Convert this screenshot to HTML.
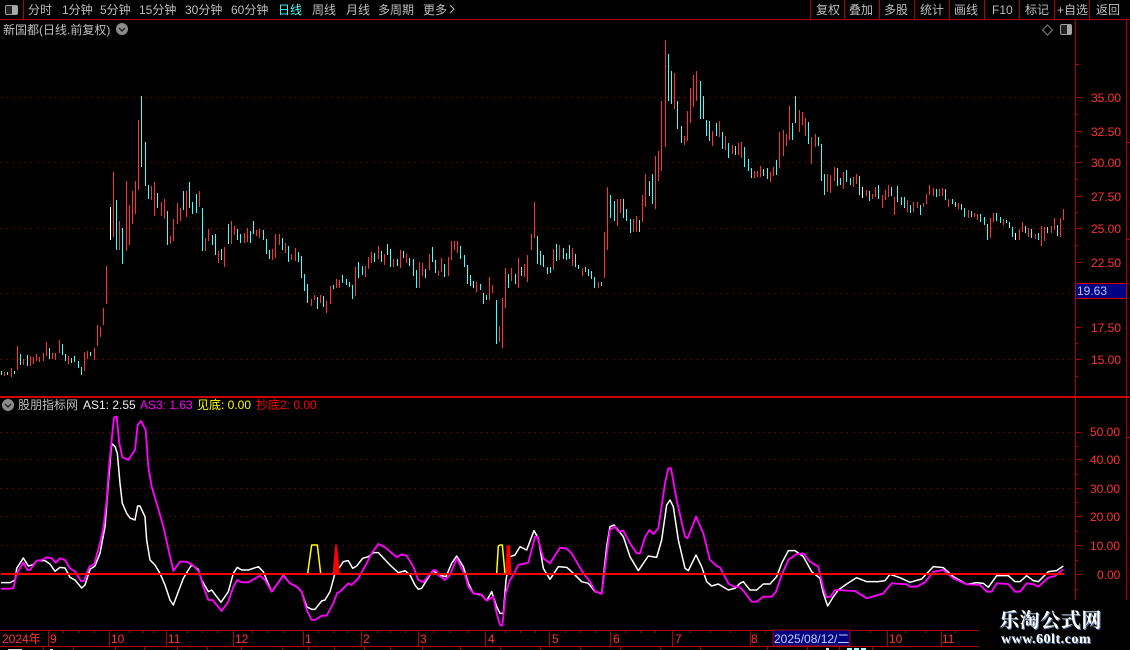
<!DOCTYPE html>
<html><head><meta charset="utf-8"><style>
html,body{margin:0;padding:0;background:#000;width:1130px;height:650px;overflow:hidden}
#w{position:relative;width:1130px;height:650px;overflow:hidden;background:#000}
svg{position:absolute;left:0;top:0}
text{font-family:"Liberation Sans","Noto Sans CJK SC",sans-serif;font-size:12px}
.t text{fill:#bdbdbd}
.r text{fill:#ff3232}
.wm{position:absolute;color:#fff;white-space:nowrap;font-weight:bold}
</style></head><body><div id="w">
<svg width="1130" height="650" viewBox="0 0 1130 650">
<!-- grid -->
<g stroke="#a00000" stroke-dasharray="1 5" shape-rendering="crispEdges" fill="none">
<path d="M1 97.5H1075M1 162.5H1075M1 228.5H1075M1 293.5H1075M1 359.5H1075M1 432.5H1075M1 459.5H1075M1 488.5H1075M1 516.5H1075M1 545.5H1075"/>
</g>
<!-- candles -->
<g transform="translate(.5,0)" shape-rendering="crispEdges" fill="none" stroke-width="1">
<path stroke="#ff3232" d="M4 372V376M11 368V377M17 346V370M23 359V365M30 356V366M33 357V364M36 354V361M39 357V362M43 353V361M46 342V356M52 353V359M55 353V360M59 340V353M68 356V364M84 352V371M87 351V359M94 348V360M97 325V346M100 327V337M103 308V325M106 266V304M113 172V237M119 221V250M126 181V251M129 205V245M132 191V224M135 181V214M138 120V190M151 186V200M154 182V216M161 202V216M164 199V219M170 236V244M173 219V241M177 203V224M180 208V221M186 191V217M199 191V207M205 238V251M208 229V241M218 251V263M224 247V267M231 221V244M234 226V235M244 233V243M247 228V242M256 230V236M259 229V238M272 249V260M275 234V258M279 234V245M285 243V253M291 254V260M295 248V261M311 299V306M314 295V300M320 295V303M326 301V313M330 286V304M336 279V288M339 280V288M355 267V296M365 266V277M368 257V269M371 252V263M378 246V259M384 254V265M393 259V267M400 250V268M406 254V263M419 262V288M422 263V276M429 254V270M438 271V276M441 258V272M448 257V276M451 241V260M454 241V250M457 241V253M476 282V292M489 277V300M492 285V293M499 326V342M502 298V348M505 268V308M511 268V281M518 258V288M524 264V277M527 255V282M531 234V250M534 202V238M553 249V270M559 245V260M572 248V266M582 268V276M598 282V288M604 232V278M607 187V250M617 199V226M620 199V213M633 219V232M636 216V232M642 195V222M645 174V207M655 156V209M658 151V181M661 101V171M665 40V147M674 73V109M684 136V145M687 111V141M690 88V123M693 75V107M696 71V101M712 131V146M719 121V137M725 136V150M732 145V154M738 143V155M741 142V158M754 171V178M757 171V177M760 166V177M770 172V182M773 167V176M779 132V168M783 130V156M786 134V146M789 106V140M799 110V132M802 112V125M805 118V136M811 137V164M815 134V147M827 174V192M830 175V193M834 167V181M843 172V189M853 177V187M856 174V184M866 190V196M872 194V199M875 187V197M882 195V208M885 190V200M888 185V197M894 197V215M907 200V212M913 202V212M917 202V208M923 203V207M926 194V204M929 185V195M933 188V196M939 189V196M942 188V196M948 199V207M958 203V209M968 210V218M974 213V217M977 214V220M990 218V238M993 213V222M1003 219V225M1019 229V240M1022 222V232M1028 228V237M1035 234V239M1041 226V246M1044 227V241M1051 226V233M1054 218V230M1060 218V237M1063 209V220"/>
<path stroke="#40ffff" d="M1 371V375M7 372V375M14 371V374M20 354V365M27 355V366M49 348V359M62 344V355M65 354V361M71 358V363M74 356V362M78 361V368M81 367V375M90 352V356M116 200V250M122 228V264M141 96V167M145 142V186M148 185V199M157 193V208M167 211V245M183 191V210M189 182V208M192 202V214M196 194V213M202 208V251M212 235V245M215 234V255M221 249V260M228 224V244M237 229V240M240 234V243M250 231V243M253 221V234M263 230V240M266 239V254M269 250V259M282 238V250M288 246V262M298 252V262M301 256V278M304 274V291M307 284V303M317 297V309M323 296V307M333 285V289M342 275V283M346 279V285M349 282V287M352 285V299M358 262V278M362 266V275M374 253V262M381 251V262M387 244V255M390 249V267M397 259V266M403 251V258M409 258V266M413 259V276M416 270V288M425 269V278M432 247V262M435 260V273M444 264V277M460 246V259M464 255V267M467 265V284M470 275V286M473 281V288M480 284V290M483 293V304M486 295V300M496 300V344M508 274V288M515 274V284M521 267V276M537 236V264M540 251V265M543 255V267M547 267V274M550 267V273M556 244V261M563 248V259M566 253V260M569 245V259M575 254V267M578 265V269M585 267V272M588 269V276M591 271V279M594 277V288M601 282V286M610 195V218M614 201V221M623 199V218M626 209V221M630 219V233M639 220V232M649 181V196M652 174V204M668 54V101M671 71V104M677 101V129M681 126V143M700 81V119M703 96V119M706 120V136M709 121V141M716 123V136M722 132V149M728 143V158M735 146V155M744 147V167M748 159V171M751 168V178M763 169V176M767 168V179M776 160V175M792 123V140M795 96V123M808 122V144M818 137V146M821 144V181M824 174V195M837 168V186M840 178V185M846 170V182M850 178V185M859 176V195M869 191V201M878 185V199M891 187V196M897 186V202M901 197V205M904 197V208M910 205V213M920 205V215M936 189V197M945 189V200M952 199V204M955 202V207M961 204V210M964 208V217M971 211V217M980 214V222M984 217V225M987 224V240M996 213V221M1000 217V223M1006 220V223M1009 222V228M1012 227V237M1025 226V233M1031 229V238M1038 233V240M1047 227V233M1057 225V236"/>
<path stroke="#fff" d="M110 207V240M862 187V198M1015 233V240"/>
</g>
<!-- indicator curves -->
<g fill="none" stroke-linejoin="round">
<g transform="translate(0,410) scale(.33333)">
<polyline stroke="#fff" stroke-width="4.5" points="3,518 30,518 45,510 50,475 70,444 85,468 100,464 110,452 135,452 150,462 165,484 180,472 195,474 210,502 225,510 245,534 255,525 270,478 285,468 300,430 315,350 325,220 335,100 345,110 352,130 360,220 367,280 380,310 390,324 405,330 413,288 420,288 435,320 440,390 450,450 465,465 480,490 495,525 510,570 520,585 535,545 550,505 565,480 575,465 595,478 605,510 625,545 635,540 650,560 663,577 685,545 700,490 712,472 725,480 745,480 775,470 790,485 800,510 815,545 830,525 850,495 870,520 890,530 905,545 920,590 935,598 945,598 965,573 975,570 990,545 1005,490 1020,470"/>
</g>
<g transform="translate(340,450) scale(.33333)">
<polyline stroke="#fff" stroke-width="4.5" points="0,350 10,335 25,332 38,355 50,348 68,325 85,320 100,308 115,308 150,345 175,368 195,362 210,375 225,405 235,418 245,415 270,375 280,362 295,375 318,380 335,340 350,318 370,350 385,400 400,430 425,435 440,452 455,425 470,470 480,490 490,490 498,390 510,320 525,315 540,290 560,300 582,242 595,265 610,355 630,388 655,350 680,352 695,365 725,395 745,400 765,425 785,430 800,290 810,230 822,225 850,260 870,320 895,362 925,318 950,322 965,270 980,165 990,150 1000,170 1015,270 1035,355 1045,362 1068,315 1085,350 1100,395 1115,408 1135,402 1165,420 1185,415 1200,400"/>
</g>
<g transform="translate(740,400) scale(.33333)">
<polyline stroke="#fff" stroke-width="4.5" points="0,550 10,545 30,570 50,570 70,552 90,552 110,530 125,490 145,452 165,452 190,470 215,515 240,535 250,580 263,618 280,590 295,570 320,552 350,533 380,545 415,545 435,542 450,523 480,533 510,547 545,537 580,500 610,503 640,530 680,553 710,548 730,550 745,562 770,527 805,527 825,545 840,545 860,527 880,542 895,545 925,515 950,512 970,498"/>
</g>
<g transform="translate(0,410) scale(.33333)">
<polyline stroke="#ff00ff" stroke-width="5.5" points="3,537 40,535 50,490 70,458 82,480 90,480 110,452 125,450 140,442 155,445 167,458 180,445 195,450 210,475 225,485 243,513 252,513 268,470 283,462 300,400 310,355 320,270 327,170 335,90 342,22 350,20 358,100 367,142 385,150 405,120 413,45 423,33 437,60 445,170 455,230 470,280 490,350 520,483 540,455 560,455 580,467 597,485 610,530 625,570 638,570 665,603 685,575 700,530 712,510 725,517 745,517 780,497 795,510 815,545 850,497 870,520 890,530 905,545 920,600 935,630 945,630 965,617 980,617 1000,580 1012,548 1020,546"/>
<polyline stroke="#ffff00" stroke-width="4.5" points="923,490 935,405 952,405 962,490"/>
<polyline stroke="#ff0000" stroke-width="4.5" fill="#ff0000" points="1000,490 1005,435 1008,405 1012,435 1017,490"/>
</g>
<g transform="translate(340,450) scale(.33333)">
<polyline stroke="#ff00ff" stroke-width="5.5" points="0,425 25,400 35,405 55,385 80,340 95,310 115,282 135,292 170,322 185,313 200,317 220,350 235,390 250,396 280,360 290,362 295,375 315,390 330,375 350,325 375,375 385,410 400,430 420,432 440,452 460,440 470,490 480,525 487,527 497,430 510,390 520,375 535,345 565,338 585,260 592,260 610,325 630,340 660,293 680,296 695,310 730,370 750,395 765,423 785,432 810,240 825,230 835,245 850,242 870,280 890,310 900,310 915,262 928,240 940,252 955,235 975,100 985,55 993,55 1010,150 1035,260 1043,265 1068,200 1090,250 1110,330 1130,348 1140,352 1165,400 1180,410 1200,410"/>
<polyline stroke="#ffff00" stroke-width="4.5" points="470,370 475,288 480,285 487,285 495,370"/>
<polyline stroke="#ff0000" stroke-width="4.5" fill="#ff0000" points="499,372 502,288 508,288 512,372"/>
</g>
<g transform="translate(740,400) scale(.33333)">
<polyline stroke="#ff00ff" stroke-width="5.5" points="0,563 10,572 35,605 50,605 70,590 95,590 108,575 125,525 145,480 170,462 190,460 210,485 235,500 250,565 260,592 272,590 285,570 345,573 380,595 430,580 455,550 500,553 510,560 530,560 555,547 580,515 610,510 640,535 680,553 720,555 740,575 755,575 770,550 805,552 825,575 840,575 860,550 880,553 895,560 925,533 945,528 970,508"/>
</g>
</g>
<rect x="1" y="573" width="1063" height="2" fill="#ff0000"/>
<!-- frame lines -->
<g shape-rendering="crispEdges" fill="none" stroke="#b40000">
<path d="M0 19.5H1130M23.5 0V19M810.5 0V19M844.5 0V19M879.5 0V19M914.5 0V19M949.5 0V19M984.5 0V19M1019.5 0V19M1054.5 0V19M1089.5 0V19"/>
<path d="M1075.5 20V600M1126.5 20V600"/>
<path d="M1075 97.5H1081M1075 131.5H1081M1075 162.5H1081M1075 196.5H1081M1075 228.5H1081M1075 262.5H1081M1075 327.5H1081M1075 359.5H1081M1075 64.5H1079M1075 114.5H1078M1075 146.5H1078M1075 179.5H1078M1075 212.5H1078M1075 245.5H1078M1075 343.5H1078M1075 376.5H1078"/>
<path d="M1075 432.5H1081M1075 459.5H1081M1075 488.5H1081M1075 516.5H1081M1075 545.5H1081M1075 574.5H1081M1075 446.5H1078M1075 474.5H1078M1075 502.5H1078M1075 531.5H1078M1075 560.5H1078M1075 589.5H1078"/>
<path d="M1127 142.5H1130M1127 239.5H1130M1127 437.5H1130"/>
<path d="M0 630.5H1075M0 646.5H1075"/>
<path d="M48.5 630V646M109.5 630V646M166.5 630V646M233.5 630V646M303.5 630V646M361.5 630V646M418.5 630V646M485.5 630V646M549.5 630V646M610.5 630V646M672.5 630V646M750.5 630V646M887.5 630V646M941.5 630V646"/>
<path d="M63.5 630V633M79.5 630V633M94.5 630V633M129.5 630V633M143.5 630V633M153.5 630V633M187.5 630V633M202.5 630V633M217.5 630V633M252.5 630V633M267.5 630V633M283.5 630V633M318.5 630V633M333.5 630V633M347.5 630V633M377.5 630V633M390.5 630V633M405.5 630V633M433.5 630V633M450.5 630V633M468.5 630V633M505.5 630V633M520.5 630V633M535.5 630V633M565.5 630V633M580.5 630V633M595.5 630V633M625.5 630V633M640.5 630V633M655.5 630V633M690.5 630V633M710.5 630V633M730.5 630V633M765.5 630V633M870.5 630V633M905.5 630V633M925.5 630V633M955.5 630V633"/>
<path d="M43.5 647V650M73.5 647V650M115.5 647V650M144.5 647V650M177.5 647V650M207.5 647V650M241.5 647V650M282.5 647V650M308.5 647V650M334.5 647V650M364.5 647V650M390.5 647V650M422.5 647V650M460.5 647V650M500.5 647V650M540.5 647V650M580.5 647V650M620.5 647V650M660.5 647V650M700.5 647V650M767.5 647V650M807.5 647V650M839.5 647V650M872.5 647V650"/>
</g>
<rect x="0" y="396" width="1130" height="2" fill="#d00000"/>
<rect x="8" y="649" width="14" height="1" fill="#ddd"/>
<rect x="50" y="649" width="3" height="1" fill="#ddd"/>
<rect x="826" y="648" width="3" height="2" fill="#ddd"/>
<path d="M847 649H866" stroke="#a0ffff" stroke-width="2" stroke-dasharray="5 2" shape-rendering="crispEdges"/>
<!-- boxes -->
<rect x="1075.5" y="283.5" width="51" height="15" fill="#000080" stroke="#d00000" shape-rendering="crispEdges"/>
<rect x="773" y="630" width="77" height="16" fill="#000080" stroke="#b40000" shape-rendering="crispEdges"/>
<!-- toolbar text -->
<g class="t">
<text x="28" y="14">分时</text><text x="62" y="14">1分钟</text><text x="100" y="14">5分钟</text><text x="139" y="14">15分钟</text><text x="185" y="14">30分钟</text><text x="231" y="14">60分钟</text>
<text x="278" y="14" style="fill:#40ffff">日线</text><text x="312" y="14">周线</text><text x="346" y="14">月线</text><text x="378" y="14">多周期</text><text x="423" y="14">更多</text>
<text x="816" y="14">复权</text><text x="849" y="14">叠加</text><text x="884" y="14">多股</text><text x="920" y="14">统计</text><text x="954" y="14">画线</text><text x="992" y="14">F10</text><text x="1025" y="14">标记</text><text x="1057" y="14">+自选</text><text x="1096" y="14">返回</text>
<text x="3" y="34">新国都(日线.前复权)</text>
<text x="18" y="409">股朋指标网</text>
</g>
<path d="M450 5l4 4-4 4" fill="none" stroke="#bdbdbd"/>
<!-- icons -->
<rect x="5.5" y="5.5" width="12" height="9" rx="1.5" fill="#222" stroke="#a0a0a0"/><rect x="12" y="6" width="5" height="8" fill="#a8a8a8"/>
<rect x="1060.5" y="24.5" width="11" height="10" rx="1.5" fill="#222" stroke="#a0a0a0"/><rect x="1067" y="25" width="4" height="9" fill="#a8a8a8"/>
<path d="M1047.5 25l5 5-5 5-5-5z" fill="none" stroke="#808080"/>
<circle cx="122" cy="29" r="6" fill="#8c8c8c"/><path d="M119 28l3 3 3-3" fill="none" stroke="#222" stroke-width="1.4"/>
<circle cx="8" cy="405" r="6" fill="#8c8c8c"/><path d="M5 404l3 3 3-3" fill="none" stroke="#222" stroke-width="1.4"/>
<!-- indicator legend -->
<text x="83" y="409" fill="#f0f0f0">AS1: 2.55</text>
<text x="140" y="409" fill="#ff00ff">AS3: 1.63</text>
<text x="197" y="409" fill="#ffff00">见底: 0.00</text>
<text x="256" y="409" fill="#ff0000">抄底2: 0.00</text>
<!-- axis labels -->
<g class="r">
<text x="1091" y="102">35.00</text><text x="1091" y="136">32.50</text><text x="1091" y="167">30.00</text><text x="1091" y="201">27.50</text><text x="1091" y="233">25.00</text><text x="1091" y="267">22.50</text><text x="1091" y="332">17.50</text><text x="1091" y="364">15.00</text>
<text x="1090" y="436">50.00</text><text x="1090" y="464">40.00</text><text x="1090" y="493">30.00</text><text x="1090" y="521">20.00</text><text x="1090" y="550">10.00</text><text x="1097" y="579">0.00</text>
<text x="2" y="643">2024年</text><text x="50" y="643">9</text><text x="111" y="643">10</text><text x="168" y="643">11</text><text x="235" y="643">12</text><text x="305" y="643">1</text><text x="363" y="643">2</text><text x="420" y="643">3</text><text x="488" y="643">4</text><text x="552" y="643">5</text><text x="613" y="643">6</text><text x="675" y="643">7</text><text x="751" y="643">8</text><text x="889" y="643">10</text><text x="942" y="643">11</text>
</g>
<text x="1077" y="295" fill="#b4c8ff">19.63</text>
<text x="774" y="643" fill="#c0d0ff">2025/08/12/二</text>
<!-- watermark backing -->
<rect x="978" y="600" width="152" height="50" fill="#000"/>
</svg>
<div class="wm" style="left:999px;top:606px;font:bold 20px/26px 'Noto Serif CJK SC','Liberation Serif',serif;letter-spacing:.6px;text-shadow:1px 1px 0 #5a7ab0">乐淘公式网</div>
<div class="wm" style="left:1001px;top:631px;font:bold 14px/17px 'Liberation Serif',serif;letter-spacing:.5px;text-shadow:1px 1px 0 #5a7ab0">www.60lt.com</div>
</div></body></html>
